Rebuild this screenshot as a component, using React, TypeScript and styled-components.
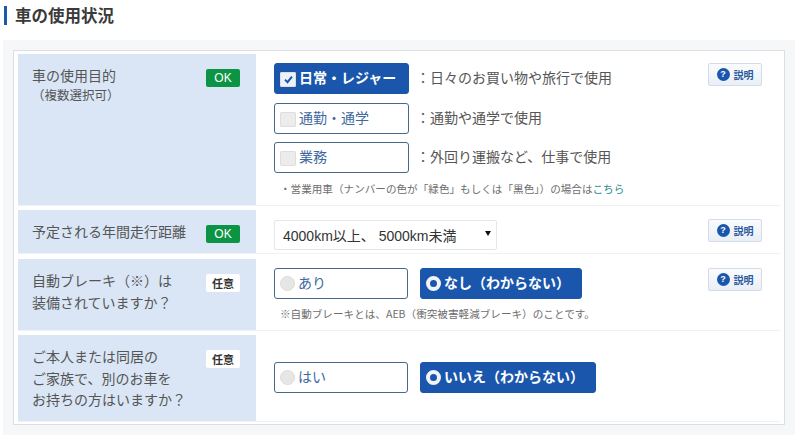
import React from "react";
import styled, { createGlobalStyle } from "styled-components";

const GlobalStyle = createGlobalStyle`
  html, body {
    margin: 0;
    background: #fff;
    color: #4f4f4f;
    font-family: "Noto Sans CJK JP", "Noto Sans", sans-serif;
  }
`;

export default function App() {
  return (
    <Page>
      <GlobalStyle />
      <Heading>車の使用状況</Heading>
      <Panel>
        <Card>
          <Row $height={151}>
            <LabelCell>
              <LabelText>
                車の使用目的
                <SubLabel>（複数選択可）</SubLabel>
              </LabelText>
              <OkBadge>OK</OkBadge>
            </LabelCell>
            <ContentCell>
              <Stack>
                <OptionRow>
                  <Option $selected>
                    <CheckBox $checked>
                      <svg width="11" height="11" viewBox="0 0 11 11">
                        <path d="M2 5.6 L4.5 8.2 L9 2.6" fill="none" stroke="#1a56ac" strokeWidth="2" />
                      </svg>
                    </CheckBox>
                    日常・レジャー
                  </Option>
                  <Desc>：日々のお買い物や旅行で使用</Desc>
                </OptionRow>
                <OptionRow>
                  <Option>
                    <CheckBox />
                    通勤・通学
                  </Option>
                  <Desc>：通勤や通学で使用</Desc>
                </OptionRow>
                <OptionRow>
                  <Option>
                    <CheckBox />
                    業務
                  </Option>
                  <Desc>：外回り運搬など、仕事で使用</Desc>
                </OptionRow>
                <Note $top={-1}>
                  ・営業用車（ナンバーの色が「緑色」もしくは「黒色」）の場合は<NoteLink>こちら</NoteLink>
                </Note>
              </Stack>
              <HelpButton />
            </ContentCell>
          </Row>
          <Row $height={43} $below={1}>
            <LabelCell>
              <LabelText>予定される年間走行距離</LabelText>
              <OkBadge>OK</OkBadge>
            </LabelCell>
            <ContentCell>
              <SelectBox>
                4000km以上、 5000km未満
                <Caret />
              </SelectBox>
              <HelpButton />
            </ContentCell>
          </Row>
          <Row $height={71}>
            <LabelCell>
              <LabelText>
                自動ブレーキ（※）は
                <br />
                装備されていますか？
              </LabelText>
              <OptionalBadge>任意</OptionalBadge>
            </LabelCell>
            <ContentCell>
              <Stack>
                <ChoiceRow>
                  <Option $width={134}>
                    <Radio />
                    あり
                  </Option>
                  <Option $selected $width={162}>
                    <Radio $checked />
                    なし（わからない）
                  </Option>
                </ChoiceRow>
                <Note $top={7}>※自動ブレーキとは、AEB（衝突被害軽減ブレーキ）のことです。</Note>
              </Stack>
              <HelpButton />
            </ContentCell>
          </Row>
          <Row $height={86}>
            <LabelCell>
              <LabelText>
                ご本人または同居の
                <br />
                ご家族で、別のお車を
                <br />
                お持ちの方はいますか？
              </LabelText>
              <OptionalBadge>任意</OptionalBadge>
            </LabelCell>
            <CenteredCell>
              <ChoiceRow>
                <Option $width={134}>
                  <Radio />
                  はい
                </Option>
                <Option $selected $width={176}>
                  <Radio $checked />
                  いいえ（わからない）
                </Option>
              </ChoiceRow>
            </CenteredCell>
          </Row>
        </Card>
      </Panel>
    </Page>
  );
}

const HelpButton = () => (
  <Help>
    <HelpIcon>?</HelpIcon>
    説明
  </Help>
);

const Page = styled.div`
  width: 800px;
  height: 443px;
  padding: 6px 5px 0 3px;
  box-sizing: border-box;
  overflow: hidden;
`;

const Heading = styled.h2`
  display: flex;
  align-items: center;
  height: 19px;
  margin: 0 0 15px 1px;
  padding-left: 8px;
  border-left: 3px solid #1f58a8;
  color: #3a3a3a;
  font-size: 16.5px;
  font-weight: 700;
  line-height: 19px;
`;

const Panel = styled.div`
  height: 395px;
  padding: 10px;
  box-sizing: border-box;
  background: #f6f7f9;
`;

const Card = styled.div`
  display: flex;
  flex-direction: column;
  gap: 5px;
  height: 375px;
  padding: 3px 4px;
  box-sizing: border-box;
  background: #fff;
  border: 1px solid #dcdfe2;
`;

const Row = styled.div<{ $height: number; $below?: number }>`
  display: grid;
  grid-template-columns: 238px 1fr;
  flex: none;
  height: ${({ $height }) => $height}px;
  margin-bottom: ${({ $below }) => $below ?? 0}px;
  box-shadow: 0 1px 0 #f0f1f3;
`;

const LabelCell = styled.div`
  display: flex;
  justify-content: space-between;
  align-items: flex-start;
  padding: 11px 16px 0 14px;
  background: #dae6f6;
`;

const LabelText = styled.div`
  color: #555;
  font-size: 14px;
  line-height: 21.5px;
`;

const SubLabel = styled.div`
  margin-top: -1px;
  font-size: 12.5px;
  line-height: 17px;
`;

const OkBadge = styled.span`
  flex: none;
  width: 34px;
  height: 18px;
  margin-top: 4px;
  border-radius: 2px;
  background: #0b9444;
  color: #fff;
  font-family: "Liberation Sans", sans-serif;
  font-size: 12px;
  line-height: 18px;
  text-align: center;
`;

const OptionalBadge = styled.span`
  flex: none;
  width: 34px;
  height: 18px;
  margin-top: 4px;
  border-radius: 2px;
  background: #fff;
  color: #333;
  font-size: 11px;
  font-weight: 700;
  line-height: 18px;
  text-align: center;
`;

const ContentCell = styled.div`
  display: flex;
  justify-content: space-between;
  align-items: flex-start;
  padding: 9px 18px 0 18px;
`;

const CenteredCell = styled.div`
  display: flex;
  align-items: center;
  padding: 0 18px 1px;
`;

const Stack = styled.div`
  display: flex;
  flex-direction: column;
`;

const OptionRow = styled.div`
  display: flex;
  align-items: center;
  gap: 7px;
  margin-bottom: 8.5px;
`;

const ChoiceRow = styled.div`
  display: flex;
  gap: 12px;
`;

const Option = styled.div<{ $selected?: boolean; $width?: number }>`
  display: flex;
  align-items: center;
  gap: 3px;
  width: ${({ $width }) => $width ?? 135}px;
  height: 31px;
  padding: 0 0 3px 5px;
  box-sizing: border-box;
  border: 1px solid ${({ $selected }) => ($selected ? "#1a56ac" : "#46688c")};
  border-radius: 3px;
  background: ${({ $selected }) => ($selected ? "#1a56ac" : "#fff")};
  color: ${({ $selected }) => ($selected ? "#fff" : "#3d68a0")};
  font-size: 14px;
  font-weight: ${({ $selected }) => ($selected ? 700 : 400)};
  white-space: nowrap;
`;

const CheckBox = styled.span<{ $checked?: boolean }>`
  display: flex;
  align-items: center;
  justify-content: center;
  flex: none;
  width: 16px;
  height: 15px;
  margin: 5px 0 0 0;
  border-radius: 2px;
  background: ${({ $checked }) => ($checked ? "#eef2f8" : "#ececec")};
  box-shadow: inset 0 0 0 1px #dedede;
`;

const Radio = styled.span<{ $checked?: boolean }>`
  flex: none;
  width: 15px;
  height: 15px;
  margin-top: 3px;
  box-sizing: border-box;
  border-radius: 50%;
  background: ${({ $checked }) => ($checked ? "#1a56ac" : "#e6e6e6")};
  border: ${({ $checked }) => ($checked ? "4px solid #f0f3f8" : "1px solid #dcdcdc")};
`;

const Desc = styled.span`
  margin-bottom: 3px;
  color: #555;
  font-size: 14px;
  white-space: nowrap;
`;

const Note = styled.div<{ $top: number }>`
  margin: ${({ $top }) => $top}px 0 0 6px;
  color: #6e6e6e;
  font-size: 10.6px;
  line-height: 16px;
  white-space: nowrap;
`;

const NoteLink = styled.span`
  color: #2b8a92;
`;

const Help = styled.div`
  display: flex;
  align-items: center;
  justify-content: center;
  gap: 4px;
  flex: none;
  width: 54px;
  height: 23px;
  box-sizing: border-box;
  border: 1px solid #d5dce6;
  border-radius: 2px;
  background: linear-gradient(#fafbfd, #e9eff8);
  color: #2b5a9c;
  font-size: 10px;
  font-weight: 700;
`;

const HelpIcon = styled.span`
  width: 13px;
  height: 13px;
  border-radius: 50%;
  background: #1a56ac;
  color: #fff;
  font-family: "Liberation Sans", sans-serif;
  font-size: 9px;
  font-weight: 700;
  line-height: 13px;
  text-align: center;
`;

const SelectBox = styled.div`
  display: flex;
  align-items: center;
  justify-content: space-between;
  width: 223px;
  height: 30px;
  margin-top: 1px;
  padding: 0 5px 0 8px;
  box-sizing: border-box;
  border: 1px solid #e4e6ea;
  border-radius: 2px;
  color: #333;
  font-family: "Liberation Sans", "Noto Sans CJK JP", sans-serif;
  font-size: 14px;
  white-space: pre;
`;

const Caret = styled.span`
  width: 0;
  height: 0;
  margin: 0 0 4px;
  border-left: 3px solid transparent;
  border-right: 3px solid transparent;
  border-top: 5px solid #111;
`;
